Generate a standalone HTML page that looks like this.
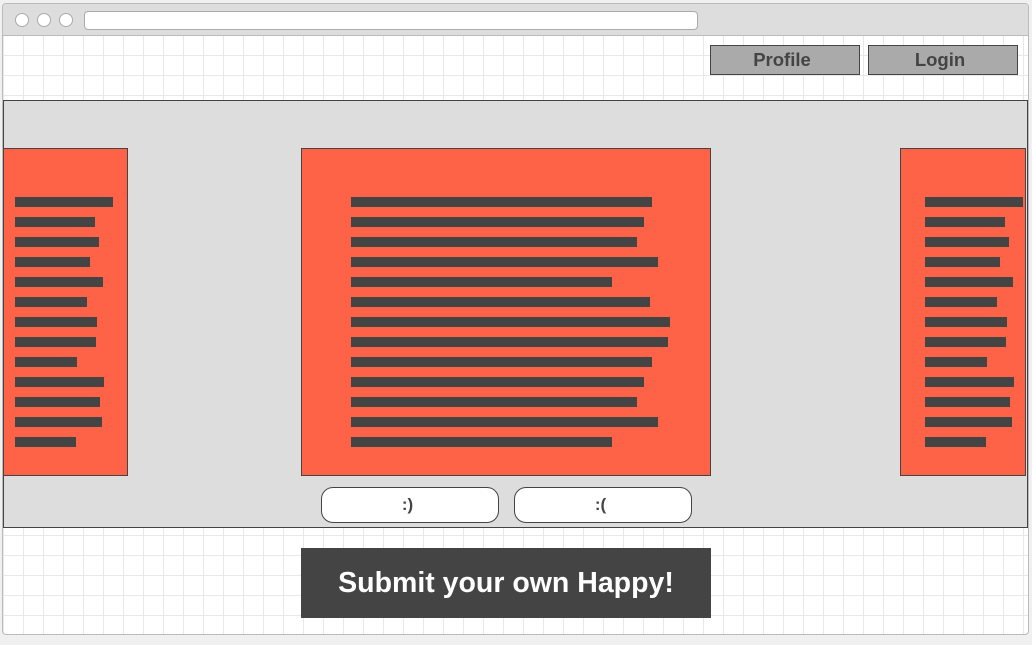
<!DOCTYPE html>
<html><head><style>
*{margin:0;padding:0;box-sizing:border-box}
body{width:1032px;height:645px;background:#f0f0f0;position:relative;overflow:hidden;font-family:"Liberation Sans",sans-serif}
.frame{position:absolute;left:2px;top:3px;width:1027px;height:632px;border:1px solid #bbb;border-radius:4px;background-color:#fff;
background-image:linear-gradient(#e8e8e8 1px,transparent 1px),linear-gradient(90deg,#e8e8e8 1px,transparent 1px);background-size:20px 20px;background-position:0px 11px,0px 0px;overflow:hidden}
.bar{position:absolute;left:0;top:0;right:0;height:32px;background:#ddd;border-bottom:1px solid #bbb}
.dot{position:absolute;top:9px;width:14px;height:14px;border-radius:50%;background:#fff;border:1px solid #aaa}
.url{position:absolute;left:81px;top:7px;width:614px;height:19px;background:#fff;border:1px solid #aaa;border-radius:4px}
.a{position:absolute}
.btn{position:absolute;top:45px;width:150px;height:30px;background:#aaa;border:1px solid #444;color:#444;font-weight:bold;font-size:18.5px;text-align:center;line-height:28px;padding-right:6px}
.card{position:absolute;top:148px;height:328px;background:#ff6347;border:1px solid #444}
.l{position:absolute;height:10px;background:#444}
.pill{position:absolute;top:487px;width:178px;height:36px;background:#fff;border:1px solid #444;border-radius:12px;text-align:center;line-height:34px;font-weight:bold;font-size:17px;color:#444;padding-right:5px}
</style></head><body>
<div class="frame">
<div class="bar"><div class="dot" style="left:12px"></div><div class="dot" style="left:34px"></div><div class="dot" style="left:56px"></div><div class="url"></div></div>
</div>
<div class="btn" style="left:710px">Profile</div>
<div class="btn" style="left:868px">Login</div>
<div class="a" style="left:3px;top:100px;width:1025px;height:428px;background:#ddd;border:1px solid #444"></div>
<div class="card" style="left:3px;width:125px"></div>
<div class="card" style="left:301px;width:410px"></div>
<div class="card" style="left:900px;width:126px"></div>
<div id="bars"></div>
<div class="pill" style="left:321px">:)</div>
<div class="pill" style="left:514px">:(</div>
<div class="a" style="left:301px;top:548px;width:410px;height:70px;background:#444;color:#fff;font-weight:bold;font-size:28.5px;text-align:center;line-height:70px">Submit your own Happy!</div>
<script>
var c=[652,644,637,658,612,650,670,668,652,644,637,658,612],L=[113,95,99,90,103,87,97,96,77,104,100,102,76],R=[1023,1005,1009,1000,1013,997,1007,1006,987,1014,1010,1012,986],h='';
for(var i=0;i<13;i++){var y=197+20*i;
h+='<div class="l" style="left:351px;top:'+y+'px;width:'+(c[i]-351)+'px"></div>';
h+='<div class="l" style="left:15px;top:'+y+'px;width:'+(L[i]-15)+'px"></div>';
h+='<div class="l" style="left:925px;top:'+y+'px;width:'+(R[i]-925)+'px"></div>';}
document.getElementById('bars').innerHTML=h;
</script>
</body></html>
